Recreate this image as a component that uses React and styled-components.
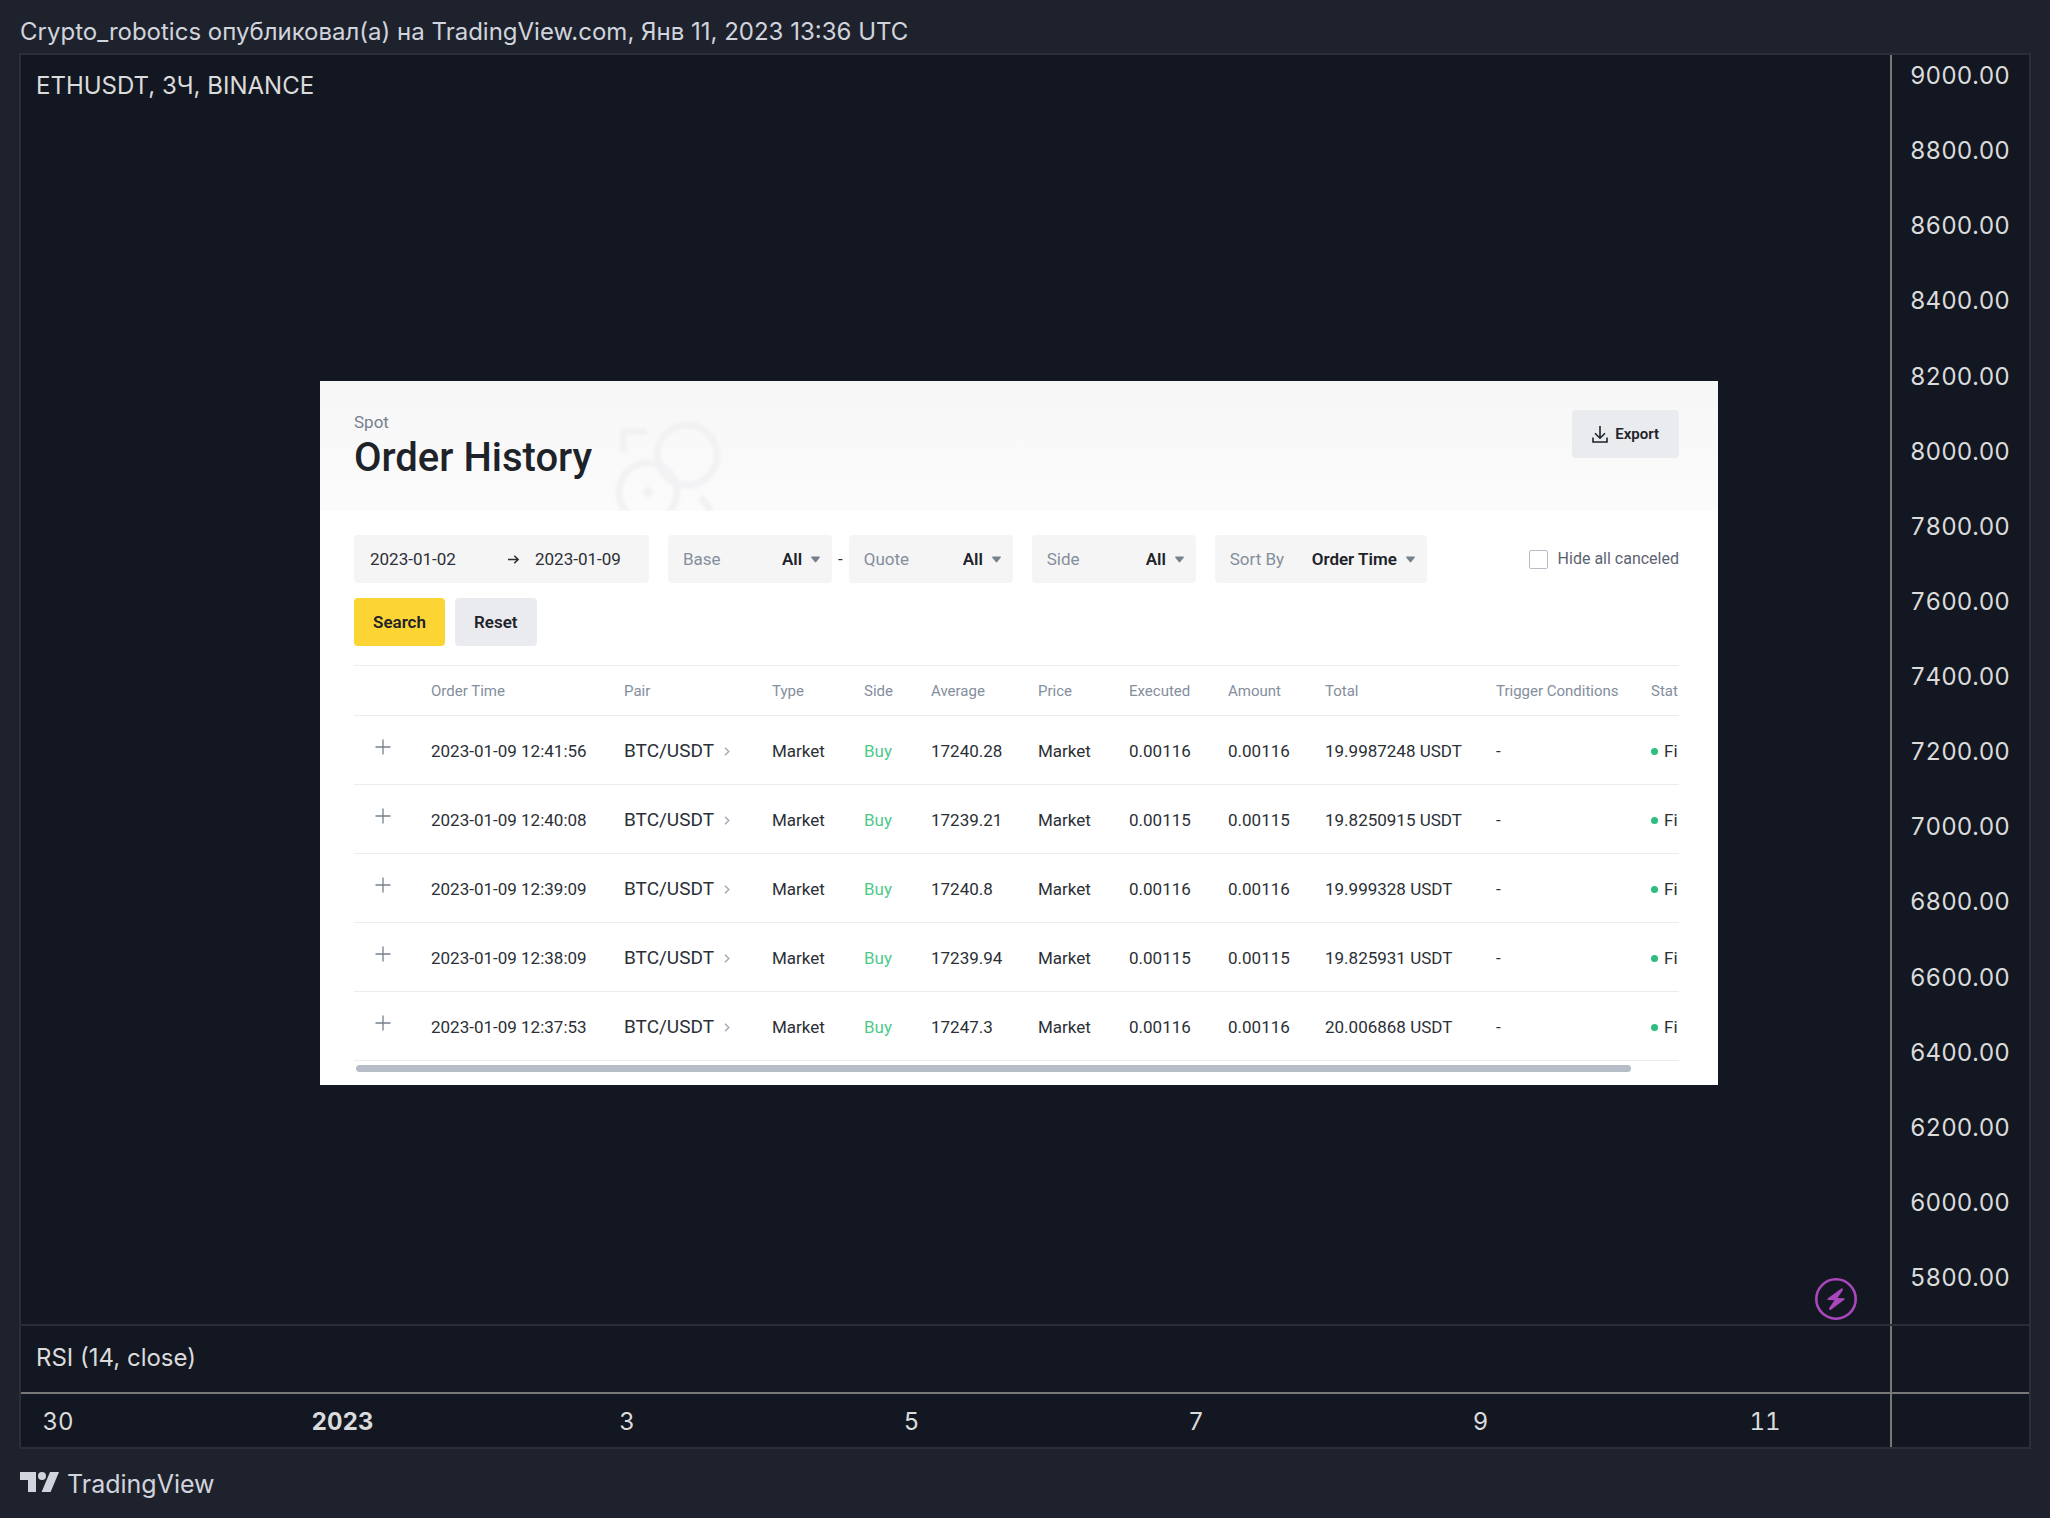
import React, { useState } from "react";
import styled, { createGlobalStyle } from "styled-components";

const GlobalStyle = createGlobalStyle`
  * {
    box-sizing: border-box;
  }

  body {
    margin: 0;
    background: #1e222d;
    font-family: Inter, "Liberation Sans", sans-serif;
  }

  button,
  input,
  select {
    font-family: inherit;
  }
`;

const prices = [
  "9000.00",
  "8800.00",
  "8600.00",
  "8400.00",
  "8200.00",
  "8000.00",
  "7800.00",
  "7600.00",
  "7400.00",
  "7200.00",
  "7000.00",
  "6800.00",
  "6600.00",
  "6400.00",
  "6200.00",
  "6000.00",
  "5800.00",
];

const dates = ["30", "2023", "3", "5", "7", "9", "11"];

// the last column takes what is left
const columns = [
  { title: "", width: "77px" },
  { title: "Order Time", width: "193px" },
  { title: "Pair", width: "148px" },
  { title: "Type", width: "92px" },
  { title: "Side", width: "67px" },
  { title: "Average", width: "107px" },
  { title: "Price", width: "91px" },
  { title: "Executed", width: "99px" },
  { title: "Amount", width: "97px" },
  { title: "Total", width: "171px" },
  { title: "Trigger Conditions", width: "155px" },
  { title: "Stat", width: "auto" },
];

const orders = [
  { time: "2023-01-09 12:41:56", average: "17240.28", amount: "0.00116", total: "19.9987248 USDT" },
  { time: "2023-01-09 12:40:08", average: "17239.21", amount: "0.00115", total: "19.8250915 USDT" },
  { time: "2023-01-09 12:39:09", average: "17240.8", amount: "0.00116", total: "19.999328 USDT" },
  { time: "2023-01-09 12:38:09", average: "17239.94", amount: "0.00115", total: "19.825931 USDT" },
  { time: "2023-01-09 12:37:53", average: "17247.3", amount: "0.00116", total: "20.006868 USDT" },
];

const Page = styled.div`
  display: flex;
  flex-direction: column;
  min-height: 100vh;
  padding: 0 19px;
  color: #d1d4dc;
`;

const PageHeader = styled.header`
  padding: 17px 1px 6px;
  font-size: 24px;
  line-height: 30px;
`;

const PageFooter = styled.footer`
  display: flex;
  align-items: center;
  gap: 8px;
  height: 69px;
  padding: 0 1px;
  font-size: 25px;
  line-height: 30px;
`;

const Logo = styled.svg`
  margin-bottom: 3px;
`;

const Chart = styled.main`
  display: grid;
  flex: 1;
  grid-template-columns: 1fr 139px;
  grid-template-rows: 1fr 68px 55px;
  border: 2px solid #2a2e39;
  background: #131722;
  color: #dbdbdb;
  font-size: 24px;
  line-height: 30px;
`;

const Canvas = styled.section`
  position: relative;
  display: grid;
  grid-template-columns: 299fr 1398fr 172fr;
  grid-template-rows: 326fr auto 239fr;
`;

const Legend = styled.div`
  grid-column: 1 / -1;
  padding: 16px 15px;
`;

const PriceAxis = styled.div`
  display: flex;
  flex-direction: column;
  justify-content: space-between;
  padding: 6px 18px 31px;
  border-left: 2px solid #787878;
  font-variant-numeric: tabular-nums;
`;

const Indicator = styled.section`
  padding: 17px 15px;
  border-top: 2px solid #2a2e39;
`;

const IndicatorAxis = styled.div`
  display: flex;
  border-top: 2px solid #2a2e39;

  &::before {
    content: "";
    width: 2px;
    background: #787878;
  }
`;

const TimeAxis = styled.div`
  display: flex;
  justify-content: space-between;
  padding: 13px 92px 0 4px;
  border-top: 2px solid #787878;
  font-variant-numeric: tabular-nums;
`;

const TimeLabel = styled.span`
  width: 66px;
  text-align: center;
  font-weight: ${(props) => (props.$strong ? 700 : 400)};
`;

const AxisCorner = styled.div`
  border-top: 2px solid #787878;
  border-left: 2px solid #787878;
`;

const Flash = styled.button`
  position: absolute;
  right: 33px;
  bottom: 4px;
  display: flex;
  padding: 0;
  border: 0;
  background: none;
`;

const Panel = styled.article`
  grid-column: 2;
  min-width: 0;
  padding-bottom: 13px;
  background: #fff;
  color: #2b2f36;
  font-family: Roboto, "Liberation Sans", sans-serif;
  font-size: 17px;
  line-height: 24px;
`;

const PanelHeader = styled.header`
  display: flex;
  height: 130px;
  padding: 29px 39px 0 34px;
  background: linear-gradient(#f7f7f7, #fbfbfb);
  overflow: hidden;
`;

const Category = styled.div`
  color: #76808f;
  font-size: 17px;
`;

const Title = styled.h1`
  margin: 0;
  color: #1e2329;
  font-size: 40px;
  font-weight: 500;
  line-height: 48px;
`;

const Ornament = styled.svg`
  flex: none;
  align-self: flex-end;
  margin-left: 20px;
  filter: blur(1px);
`;

const Button = styled.button`
  display: flex;
  align-items: center;
  justify-content: center;
  gap: 7px;
  height: 48px;
  padding: 0 19px;
  border: 0;
  border-radius: 4px;
  background: ${(props) => (props.$primary ? "#fcd535" : "#eaebef")};
  color: #1e2329;
  font-size: 17px;
  font-weight: 600;
`;

const ExportButton = styled(Button)`
  margin-left: auto;
  padding: 0 20px;
  font-size: 15px;
`;

const Filters = styled.form`
  display: flex;
  flex-wrap: wrap;
  align-items: center;
  gap: 15px 19px;
  padding: 24px 39px 19px 34px;
`;

const Field = styled.label`
  display: flex;
  align-items: center;
  width: ${(props) => props.$width}px;
  height: 48px;
  padding: 0 12px 0 15px;
  border-radius: 4px;
  background: #f5f5f5;
  color: #848e9c;
`;

const Pair = styled.div`
  display: flex;
  align-items: center;
  gap: 6px;
  color: #2b2f36;
`;

const DateRange = styled.div`
  display: flex;
  align-items: center;
  gap: 16px;
  width: 295px;
  height: 48px;
  padding: 0 16px;
  border-radius: 4px;
  background: #f5f5f5;
`;

const DateInput = styled.input`
  flex: 1;
  min-width: 0;
  padding: 0;
  border: 0;
  background: none;
  color: #2b2f36;
  font-size: 17px;

  &:last-child {
    flex: 0 0 98px;
  }
`;

const Select = styled.select`
  margin: 0 8px 0 auto;
  padding: 0;
  border: 0;
  appearance: none;
  background: none;
  color: #1e2329;
  font-size: 17px;
  font-weight: 600;
`;

const HideCanceled = styled.label`
  display: flex;
  align-items: center;
  gap: 10px;
  margin-left: auto;
  color: #5c6370;
  font-size: 16px;
`;

const Checkbox = styled.input`
  width: 19px;
  height: 19px;
  margin: 0;
  border: 1px solid #b7bdc6;
  border-radius: 2px;
  appearance: none;
  background: #fff;

  &:checked {
    background: #fcd535;
  }
`;

const Actions = styled.div`
  display: flex;
  flex-basis: 100%;
  gap: 10px;
`;

const TableWrapper = styled.div`
  margin: 0 39px 0 34px;
`;

const Table = styled.table`
  width: 100%;
  border-top: 1px solid #eaecef;
  border-collapse: collapse;
  table-layout: fixed;
  white-space: nowrap;
`;

const HeadCell = styled.th`
  width: ${(props) => props.$width};
  height: 50px;
  padding: 0;
  border-bottom: 1px solid #eaecef;
  color: #848e9c;
  font-size: 15px;
  font-weight: 400;
  text-align: left;
`;

const Cell = styled.td`
  height: 69px;
  padding: 2px 0 0;
  border-bottom: 1px solid #eaecef;
  color: ${(props) => (props.$buy ? "#4fc98b" : "#2b2f36")};
`;

const ExpandButton = styled.button`
  display: flex;
  margin: 0 0 8px 21px;
  padding: 0;
  border: 0;
  background: none;
`;

const PairLink = styled.a`
  display: flex;
  align-items: center;
  gap: 10px;
  color: #2b2f36;
  font-size: 19px;
  text-decoration: none;
`;

const Status = styled.span`
  display: flex;
  align-items: center;
  gap: 6px;

  &::before {
    content: "";
    width: 7px;
    height: 7px;
    border-radius: 50%;
    background: #2dbd7f;
  }
`;

const ScrollTrack = styled.div`
  margin: 4px 39px 0 36px;
`;

const ScrollThumb = styled.div`
  width: 96.4%;
  height: 7px;
  border-radius: 4px;
  background: #b7bdc6;
`;

function Caret() {
  return (
    <svg width="9" height="7" viewBox="0 0 9 7" fill="#76808f">
      <path d="M0 1.2Q0 .5.8.5h7.4q.8 0 .8.7L5.2 6q-.7.8-1.4 0z" />
    </svg>
  );
}

function FilterSelect({ label, value, width }) {
  return (
    <Field $width={width}>
      {label}
      <Select defaultValue={value}>
        <option>{value}</option>
      </Select>
      <Caret />
    </Field>
  );
}

function OrderRow({ order }) {
  return (
    <tr>
      <Cell>
        <ExpandButton type="button" aria-label="Expand">
          <svg width="16" height="16" viewBox="0 0 16 16" stroke="#76808f" strokeWidth="1.3">
            <path d="M8 .5v15M.5 8h15" />
          </svg>
        </ExpandButton>
      </Cell>
      <Cell>{order.time}</Cell>
      <Cell>
        <PairLink href="#">
          BTC/USDT
          <svg width="6" height="9" viewBox="0 0 6 9" fill="none" stroke="#a3a9b3" strokeWidth="1.4">
            <path d="M1 .7l3.8 3.8L1 8.3" />
          </svg>
        </PairLink>
      </Cell>
      <Cell>Market</Cell>
      <Cell $buy>Buy</Cell>
      <Cell>{order.average}</Cell>
      <Cell>Market</Cell>
      <Cell>{order.amount}</Cell>
      <Cell>{order.amount}</Cell>
      <Cell>{order.total}</Cell>
      <Cell>-</Cell>
      <Cell>
        <Status>Fi</Status>
      </Cell>
    </tr>
  );
}

function OrderHistory() {
  const [from, setFrom] = useState("2023-01-02");
  const [to, setTo] = useState("2023-01-09");
  const [hideCanceled, setHideCanceled] = useState(false);

  return (
    <Panel>
      <PanelHeader>
        <div>
          <Category>Spot</Category>
          <Title>Order History</Title>
        </div>
        <Ornament width="112" height="92" viewBox="0 0 112 92" fill="none" stroke="#f2f2f4" strokeWidth="7">
          <circle cx="75" cy="36" r="30" />
          <circle cx="36" cy="73" r="29" />
          <path d="M11.5 33V12.500H35" />
          <path d="M88 79q8 4 10 16" />
          <path d="M36 67l6 6-6 6-6-6z" fill="#f2f2f4" stroke="none" />
        </Ornament>
        <ExportButton type="button">
          <svg width="16" height="17" viewBox="0 0 16 17" fill="none" stroke="#1e2329" strokeWidth="1.6">
            <path d="M8 0v12M3 7.200l5 5 5-5M1 11.500V16h14v-4.500" />
          </svg>
          Export
        </ExportButton>
      </PanelHeader>

      <Filters onSubmit={(e) => e.preventDefault()}>
        <DateRange>
          <DateInput aria-label="From" value={from} onChange={(e) => setFrom(e.target.value)} />
          <svg width="11" height="9" viewBox="0 0 11 9" fill="none" stroke="#2b2f36" strokeWidth="1.5">
            <path d="M0 4.500h10M6.300.7l3.800 3.800-3.800 3.800" />
          </svg>
          <DateInput aria-label="To" value={to} onChange={(e) => setTo(e.target.value)} />
        </DateRange>
        <Pair>
          <FilterSelect label="Base" value="All" width={164} />
          -
          <FilterSelect label="Quote" value="All" width={164} />
        </Pair>
        <FilterSelect label="Side" value="All" width={164} />
        <FilterSelect label="Sort By" value="Order Time" width={212} />
        <HideCanceled>
          <Checkbox
            type="checkbox"
            checked={hideCanceled}
            onChange={(e) => setHideCanceled(e.target.checked)}
          />
          Hide all canceled
        </HideCanceled>
        <Actions>
          <Button $primary type="submit">
            Search
          </Button>
          <Button type="reset">Reset</Button>
        </Actions>
      </Filters>

      <TableWrapper>
        <Table>
          <thead>
            <tr>
              {columns.map((column) => (
                <HeadCell key={column.title} $width={column.width}>
                  {column.title}
                </HeadCell>
              ))}
            </tr>
          </thead>
          <tbody>
            {orders.map((order) => (
              <OrderRow key={order.time} order={order} />
            ))}
          </tbody>
        </Table>
      </TableWrapper>
      <ScrollTrack>
        <ScrollThumb />
      </ScrollTrack>
    </Panel>
  );
}

function App() {
  return (
    <Page>
      <GlobalStyle />
      <PageHeader>
        Crypto_robotics опубликовал(а) на TradingView.com, Янв 11, 2023 13:36 UTC
      </PageHeader>

      <Chart>
        <Canvas>
          <Legend>ETHUSDT, 3Ч, BINANCE</Legend>
          <OrderHistory />
          <Flash type="button" aria-label="Events">
            <svg width="42" height="42" viewBox="0 0 42 42">
              <circle cx="21" cy="21" r="19.700" fill="none" stroke="#ab47bc" strokeWidth="2.600" />
              <path
                d="M26.300 10.400L12.600 20.600Q12 21.800 13 21.900L19.500 22.200 14.200 30Q13.800 32.600 16 31.700L29.500 21.500Q30 20.300 29 20.200L22.500 19.900 27.800 12.300Q28.300 9.700 26.300 10.400z"
                fill="#ab47bc"
              />
            </svg>
          </Flash>
        </Canvas>
        <PriceAxis>
          {prices.map((price) => (
            <span key={price}>{price}</span>
          ))}
        </PriceAxis>
        <Indicator>RSI (14, close)</Indicator>
        <IndicatorAxis />
        <TimeAxis>
          {dates.map((date) => (
            <TimeLabel key={date} $strong={date.length > 2}>
              {date}
            </TimeLabel>
          ))}
        </TimeAxis>
        <AxisCorner />
      </Chart>

      <PageFooter>
        <Logo width="39" height="20" viewBox="0 0 39 20" fill="#d1d4dc">
          <path d="M0 0h16v20H8V8H0z" />
          <circle cx="22" cy="4" r="4" />
          <path d="M30 0h9l-8.400 20h-9z" />
        </Logo>
        TradingView
      </PageFooter>
    </Page>
  );
}

export default App;
